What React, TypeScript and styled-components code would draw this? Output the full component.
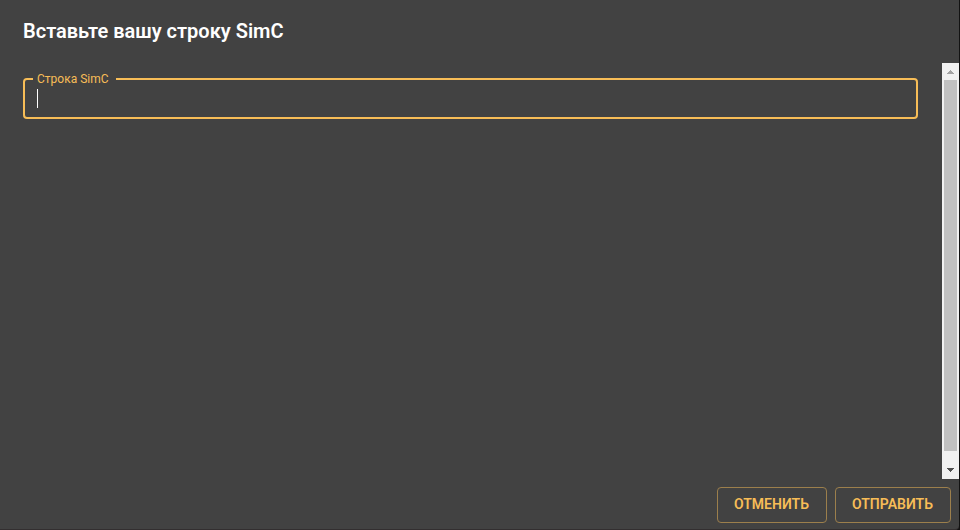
import React, { useState } from "react";
import styled, { createGlobalStyle } from "styled-components";

const accent = "#f7bd57";
const surface = "#424242";

const GlobalStyle = createGlobalStyle`
  * { box-sizing: border-box; }
  body {
    margin: 0;
    background: #121212;
    font-family: Roboto, "Noto Sans", sans-serif;
  }
`;

const Backdrop = styled.div`
  display: flex;
  min-height: 100vh;
  padding: 0 1px 0 0;
`;

const Dialog = styled.form`
  display: flex;
  flex: 1;
  flex-direction: column;
  border-bottom: 1px solid #332f30;
  border-radius: 0 0 4px 0;
  background: ${surface};
  color: #fff;
`;

const Title = styled.h2`
  margin: 0;
  padding: 15px 23px 16px;
  font-size: 20px;
  font-weight: 600;
  line-height: 32px;
`;

const Body = styled.div`
  display: flex;
  flex: 1;
`;

const Content = styled.div`
  flex: 1;
  min-width: 0;
  padding: 9px 24px 20px 23px;
`;

const Outline = styled.fieldset`
  min-width: 0;
  margin: 0;
  padding: 3px 12px 9px 8px;
  border: 2px solid ${accent};
  border-radius: 4px;
`;

const Legend = styled.legend`
  padding: 0 7px 0 4px;
  color: ${accent};
  font-size: 12px;
  line-height: 14px;
`;

const InputLine = styled.div`
  position: relative;
  display: flex;
  padding-left: 4px;
`;

const TextInput = styled.textarea`
  flex: 1;
  min-width: 0;
  height: 19px;
  padding: 0;
  border: 0;
  outline: 0;
  overflow: hidden;
  resize: none;
  background: transparent;
  color: #fff;
  caret-color: transparent;
  font-family: inherit;
  font-size: 16px;
  line-height: 19px;
`;

const Caret = styled.span`
  position: absolute;
  top: 0;
  left: 4px;
  width: 1px;
  height: 19px;
  background: #fff;
`;

const Scrollbar = styled.div`
  display: flex;
  flex-direction: column;
  width: 17px;
  background: #f1f1f1;
`;

const ScrollButton = styled.button`
  display: flex;
  align-items: center;
  justify-content: center;
  height: 17px;
  padding: 0;
  border: 0;
  background: transparent;
`;

const Track = styled.div`
  display: flex;
  flex: 1;
  padding: 0 2px 11px;
`;

const Thumb = styled.div`
  flex: 1;
  background: #c1c1c1;
`;

const Actions = styled.div`
  display: flex;
  justify-content: flex-end;
  gap: 8px;
  padding: 8px 8px 6px;
`;

const ActionButton = styled.button`
  height: 36px;
  padding: 0 17px 2px 16px;
  border: 1px solid #9c7f4c;
  border-radius: 4px;
  background: transparent;
  color: ${accent};
  font-family: inherit;
  font-size: 14px;
  font-weight: 600;
  line-height: 24px;
  text-transform: uppercase;
  cursor: pointer;
`;

export default function App() {
  const [value, setValue] = useState("");

  return (
    <>
      <GlobalStyle />
      <Backdrop>
        <Dialog role="dialog" aria-labelledby="dialog-title" onSubmit={(e) => e.preventDefault()}>
          <Title id="dialog-title">Вставьте вашу строку SimC</Title>
          <Body>
            <Content>
              <Outline>
                <Legend>
                  <label htmlFor="simc">Строка SimC</label>
                </Legend>
                <InputLine>
                  <TextInput id="simc" rows={1} value={value} onChange={(e) => setValue(e.target.value)} />
                  {value === "" && <Caret />}
                </InputLine>
              </Outline>
            </Content>
            <Scrollbar>
              <ScrollButton type="button" aria-label="Прокрутить вверх">
                <svg width="17" height="17" shapeRendering="crispEdges" fill="#a3a3a3">
                  <path d="M8 7h1v1h1v1h1v1h1v1H5v-1h1V9h1V8h1z" />
                </svg>
              </ScrollButton>
              <Track>
                <Thumb />
              </Track>
              <ScrollButton type="button" aria-label="Прокрутить вниз">
                <svg width="17" height="17" shapeRendering="crispEdges" fill="#505050">
                  <path d="M5 6h7v1h-1v1h-1v1H9v1H8V9H7V8H6V7H5z" />
                </svg>
              </ScrollButton>
            </Scrollbar>
          </Body>
          <Actions>
            <ActionButton type="button">Отменить</ActionButton>
            <ActionButton type="submit">Отправить</ActionButton>
          </Actions>
        </Dialog>
      </Backdrop>
    </>
  );
}
